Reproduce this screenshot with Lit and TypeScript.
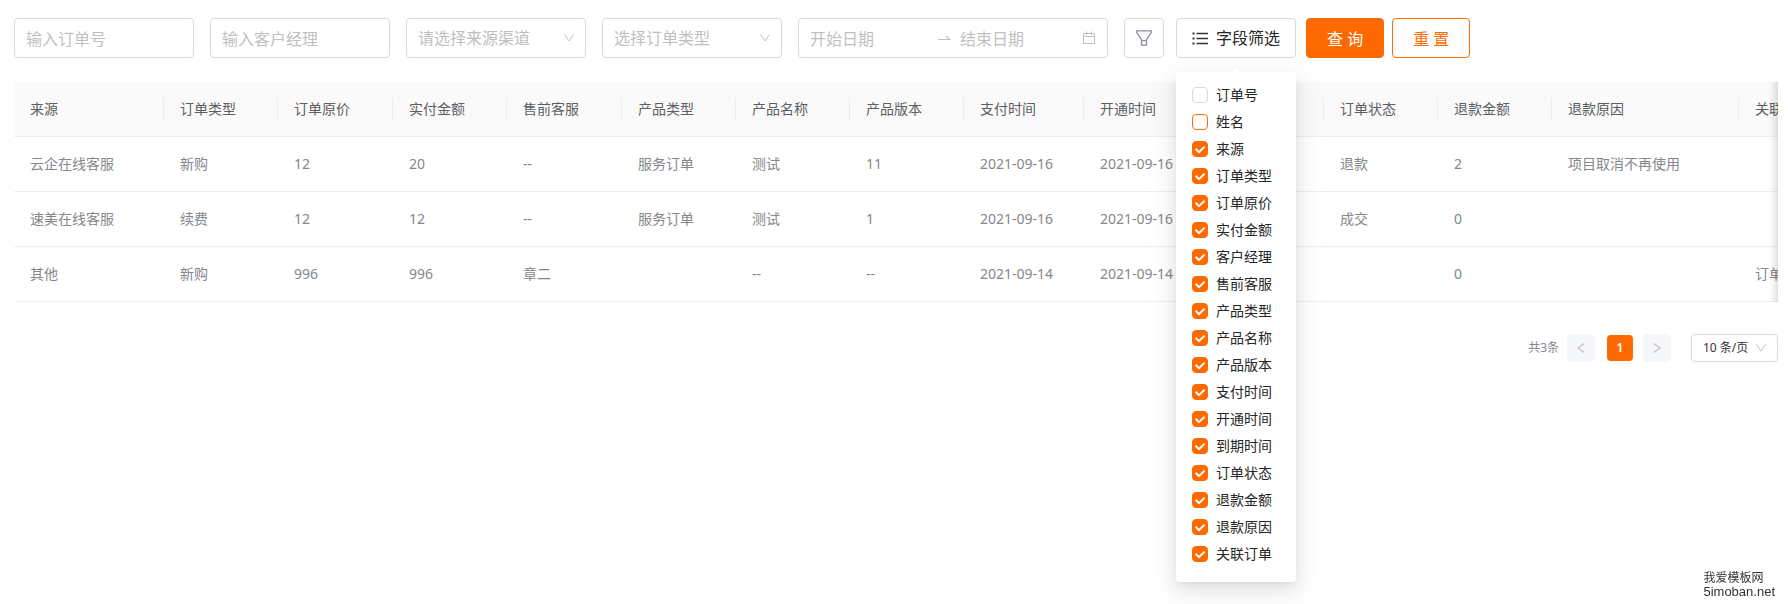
import { LitElement, html, css } from "lit";
import { customElement, state } from "lit/decorators.js";

interface Column {
  key: string;
  title: string;
  width: number;
}

const COLUMNS: Column[] = [
  { key: "source", title: "来源", width: 150 },
  { key: "type", title: "订单类型", width: 114 },
  { key: "price", title: "订单原价", width: 115 },
  { key: "paid", title: "实付金额", width: 114 },
  { key: "presale", title: "售前客服", width: 115 },
  { key: "category", title: "产品类型", width: 114 },
  { key: "product", title: "产品名称", width: 114 },
  { key: "version", title: "产品版本", width: 114 },
  { key: "payDate", title: "支付时间", width: 120 },
  { key: "openDate", title: "开通时间", width: 120 },
  { key: "endDate", title: "到期时间", width: 120 },
  { key: "status", title: "订单状态", width: 114 },
  { key: "refund", title: "退款金额", width: 114 },
  { key: "reason", title: "退款原因", width: 187 },
  { key: "related", title: "关联订单", width: 114 },
];

const TABLE_WIDTH = COLUMNS.reduce((sum, c) => sum + c.width, 0);

const ROWS: Record<string, string>[] = [
  {
    source: "云企在线客服", type: "新购", price: "12", paid: "20", presale: "--",
    category: "服务订单", product: "测试", version: "11",
    payDate: "2021-09-16", openDate: "2021-09-16",
    status: "退款", refund: "2", reason: "项目取消不再使用",
  },
  {
    source: "速美在线客服", type: "续费", price: "12", paid: "12", presale: "--",
    category: "服务订单", product: "测试", version: "1",
    payDate: "2021-09-16", openDate: "2021-09-16",
    status: "成交", refund: "0",
  },
  {
    source: "其他", type: "新购", price: "996", paid: "996", presale: "章二",
    product: "--", version: "--",
    payDate: "2021-09-14", openDate: "2021-09-14",
    refund: "0", related: "订单",
  },
];

const FIELDS = [
  "订单号", "姓名", "来源", "订单类型", "订单原价", "实付金额", "客户经理", "售前客服", "产品类型",
  "产品名称", "产品版本", "支付时间", "开通时间", "到期时间", "订单状态", "退款金额", "退款原因", "关联订单",
];

const chevron = html`<svg class="chevron" viewBox="0 0 10 8" width="10" height="8" aria-hidden="true">
  <path d="M0.5 0.5 5 7 9.5 0.5" fill="none" stroke="currentColor" />
</svg>`;

@customElement("order-table")
export class OrderTable extends LitElement {
  static styles = css`
    :host {
      display: block;
      position: relative;
    }
    .scroller {
      overflow-x: auto;
      scrollbar-width: none;
      border-radius: 4px 0 0 0;
    }
    .shade {
      position: absolute;
      inset: 0 0 0 auto;
      width: 30px;
      box-shadow: inset -10px 0 8px -8px rgba(0, 0, 0, 0.18);
      pointer-events: none;
    }
    .grid {
      table-layout: fixed;
      border-collapse: separate;
      border-spacing: 0;
      font-size: 14px;
      line-height: 22px;
    }
    .head,
    .cell {
      padding: 16px;
      border-bottom: 1px solid #f0f0f0;
      text-align: left;
      font-weight: 400;
      white-space: nowrap;
    }
    .head {
      color: #5c5e61;
      background: #fafafa linear-gradient(#ececec, #ececec) no-repeat right center / 1px 22px;
    }
    .head:last-child {
      background-image: none;
    }
    .cell {
      color: #85878a;
    }
  `;

  render() {
    return html`
      <div class="scroller">
        <table class="grid" style="width:${TABLE_WIDTH}px">
          <colgroup>
            ${COLUMNS.map((c) => html`<col style="width:${c.width}px" />`)}
          </colgroup>
          <thead>
            <tr>
              ${COLUMNS.map((c) => html`<th class="head" scope="col">${c.title}</th>`)}
            </tr>
          </thead>
          <tbody>
            ${ROWS.map(
              (row) => html`<tr>
                ${COLUMNS.map((c) => html`<td class="cell">${row[c.key] ?? ""}</td>`)}
              </tr>`
            )}
          </tbody>
        </table>
      </div>
      <div class="shade"></div>
    `;
  }
}

@customElement("field-filter")
export class FieldFilter extends LitElement {
  @state() private open = true;

  static styles = css`
    :host {
      display: block;
      position: relative;
    }
    .trigger {
      display: flex;
      align-items: center;
      gap: 8px;
      height: 40px;
      padding: 0 15px;
      border: 1px solid #d9d9d9;
      border-radius: 4px;
      background: #fff;
      color: #262626;
      font: inherit;
      font-size: 16px;
      line-height: 24px;
      white-space: nowrap;
      cursor: pointer;
    }
    .menu {
      position: absolute;
      z-index: 2;
      top: 54px;
      left: 0;
      right: 0;
      display: flex;
      flex-direction: column;
      gap: 5px;
      padding: 12px 16px 17px;
      border-radius: 4px;
      background: #fff;
      box-shadow: 0 3px 6px -4px rgba(0, 0, 0, 0.12), 0 6px 16px rgba(0, 0, 0, 0.08),
        0 9px 28px 8px rgba(0, 0, 0, 0.05);
    }
    .menu::before {
      content: "";
      position: absolute;
      top: -3px;
      left: calc(50% - 3px);
      width: 6px;
      height: 6px;
      background: #fff;
      transform: rotate(45deg);
    }
    .option {
      display: flex;
      align-items: center;
      gap: 8px;
      color: #262626;
      font-size: 14px;
      line-height: 22px;
      white-space: nowrap;
      cursor: pointer;
    }
    .box {
      appearance: none;
      flex: none;
      width: 16px;
      height: 16px;
      margin: 0;
      border: 1px solid #d9d9d9;
      border-radius: 4px;
      background: #fff;
      cursor: pointer;
    }
    .box.active {
      border-color: #ff6a00;
    }
    .box:checked {
      border-color: #ff6a00;
      background: #ff6a00
        url("data:image/svg+xml,%3Csvg xmlns='http://www.w3.org/2000/svg' viewBox='0 0 14 14'%3E%3Cpath d='M2.6 6.8 6 10.2 11.6 4.6' fill='none' stroke='white' stroke-width='2'/%3E%3C/svg%3E")
        center / 14px 14px no-repeat;
    }
  `;

  render() {
    return html`
      <button class="trigger" type="button" aria-expanded=${this.open} @click=${() => (this.open = !this.open)}>
        <svg viewBox="0 0 16 16" width="16" height="16" aria-hidden="true">
          <path d="M4.5 3.5H16M4.5 8.5H16M4.5 13.5H16" stroke="#333" stroke-width="1.3" />
          <path d="M0.5 3.5h2M0.5 8.5h2M0.5 13.5h2" stroke="#333" stroke-width="2" />
        </svg>
        字段筛选
      </button>
      ${this.open
        ? html`<div class="menu">
            ${FIELDS.map(
              (name, i) => html`<label class="option">
                <input class="box ${i === 1 ? "active" : ""}" type="checkbox" ?checked=${i > 1} />${name}
              </label>`
            )}
          </div>`
        : null}
    `;
  }
}

@customElement("app-root")
export class AppRoot extends LitElement {
  static styles = css`
    :host {
      display: block;
      box-sizing: border-box;
      min-height: 100vh;
      padding: 18px 10px 0 14px;
      background: #fff;
      font-family: "Noto Sans", "Noto Sans CJK SC", sans-serif;
    }
    * {
      box-sizing: border-box;
    }
    .toolbar {
      display: flex;
      flex-wrap: wrap;
      gap: 16px;
    }
    .actions {
      display: flex;
      gap: 12px;
    }
    .commands {
      display: flex;
      gap: 10px;
    }
    .submit {
      display: flex;
      gap: 8px;
    }
    .field {
      width: 180px;
      height: 40px;
      padding: 0 11px;
      border: 1px solid #d9d9d9;
      border-radius: 4px;
      background: #fff;
      color: #262626;
      font: inherit;
      font-size: 16px;
    }
    input.field,
    .date {
      padding-top: 2px;
    }
    .field::placeholder,
    .date::placeholder {
      color: #bfbfbf;
      opacity: 1;
    }
    .picker {
      display: grid;
      align-items: center;
      color: #bfbfbf;
    }
    .picker > * {
      grid-area: 1 / 1;
    }
    .picker .field {
      appearance: none;
      color: #bfbfbf;
    }
    .chevron {
      justify-self: end;
      margin-right: 12px;
      pointer-events: none;
    }
    .range {
      display: flex;
      align-items: center;
      width: 310px;
      height: 40px;
      padding: 0 11px;
      border: 1px solid #d9d9d9;
      border-radius: 4px;
      color: #bfbfbf;
    }
    .date {
      flex: 1;
      min-width: 0;
      padding-inline: 0;
      padding-bottom: 0;
      border: 0;
      outline: 0;
      background: none;
      font: inherit;
      font-size: 16px;
    }
    .arrow {
      flex: none;
      margin: 0 8px;
    }
    .calendar {
      flex: none;
      margin-left: 4px;
    }
    .square {
      display: grid;
      place-items: center;
      width: 40px;
      height: 40px;
      padding: 0;
      border: 1px solid #d9d9d9;
      border-radius: 4px;
      background: #fff;
      cursor: pointer;
    }
    .btn {
      height: 40px;
      padding: 0 20px;
      border: 1px solid #ff6a00;
      border-radius: 4px;
      background: #fff;
      color: #ff6a00;
      font: inherit;
      font-size: 16px;
      white-space: nowrap;
      cursor: pointer;
    }
    .btn.primary {
      background: #ff6a00;
      color: #fff;
    }
    .list {
      margin-top: 24px;
    }
    .pager {
      display: flex;
      justify-content: flex-end;
      align-items: center;
      margin-top: 32px;
      font-size: 12px;
      line-height: 20px;
      color: #85878a;
    }
    .step {
      display: grid;
      place-items: center;
      width: 28px;
      height: 28px;
      padding: 0;
      border: 0;
      border-radius: 4px;
      background: #f5f7fa;
      color: #bfbfbf;
    }
    .prev {
      margin-left: 8px;
    }
    .page {
      width: 26px;
      height: 26px;
      margin: 0 10px 0 12px;
      padding: 0;
      border: 0;
      border-radius: 4px;
      background: #ff6a00;
      color: #fff;
      font: inherit;
      font-weight: 600;
    }
    .picker.small {
      margin-left: 20px;
    }
    .picker.small .field {
      width: 87px;
      height: 28px;
      color: #333;
      font-size: 12px;
    }
    .watermark {
      position: fixed;
      right: 13px;
      bottom: 5px;
      color: #333;
      font-family: "Liberation Sans", "Noto Sans CJK SC", sans-serif;
      font-size: 12px;
      line-height: 14px;
    }
    .site {
      display: block;
      font-size: 13px;
    }
  `;

  render() {
    return html`
      <form class="toolbar" @submit=${(e: Event) => e.preventDefault()}>
        <input class="field" type="text" placeholder="输入订单号" aria-label="订单号" />
        <input class="field" type="text" placeholder="输入客户经理" aria-label="客户经理" />
        <div class="picker">
          <select class="field" aria-label="来源渠道">
            <option>请选择来源渠道</option>
          </select>
          ${chevron}
        </div>
        <div class="picker">
          <select class="field" aria-label="订单类型">
            <option>选择订单类型</option>
          </select>
          ${chevron}
        </div>
        <div class="range">
          <input class="date" type="text" placeholder="开始日期" aria-label="开始日期" />
          <svg class="arrow" viewBox="0 0 16 16" width="16" height="16" aria-hidden="true">
            <path d="M2 9.5H13.5L10 5.8" fill="none" stroke="currentColor" stroke-width="1.2" />
          </svg>
          <input class="date" type="text" placeholder="结束日期" aria-label="结束日期" />
          <svg class="calendar" viewBox="0 0 14 14" width="14" height="14" aria-hidden="true">
            <path d="M1.5 2.5H12.5V12.5H1.5ZM1.5 5.5H12.5M4.5 0.5V4M9.5 0.5V4" fill="none" stroke="currentColor" />
          </svg>
        </div>
        <div class="actions">
          <button class="square" type="button" aria-label="筛选">
            <svg viewBox="0 0 16 16" width="16" height="16" aria-hidden="true">
              <path
                d="M0.7 0.9H15.3V2.4L10.5 9.6V15.2H5.5V9.6L0.7 2.4ZM5.5 10.6H10.5"
                fill="none"
                stroke="#8c939d"
                stroke-width="1.3"
                stroke-linejoin="round"
              />
            </svg>
          </button>
          <div class="commands">
            <field-filter></field-filter>
            <div class="submit">
              <button class="btn primary" type="submit">查 询</button>
              <button class="btn" type="reset">重 置</button>
            </div>
          </div>
        </div>
      </form>

      <order-table class="list"></order-table>

      <nav class="pager" aria-label="分页">
        <span>共3条</span>
        <button class="step prev" type="button" aria-label="上一页" disabled>
          <svg viewBox="0 0 8 10" width="8" height="10" aria-hidden="true">
            <path d="M7.2 0.5 1 5 7.2 9.5" fill="none" stroke="currentColor" stroke-width="1.2" />
          </svg>
        </button>
        <button class="page" type="button" aria-current="page">1</button>
        <button class="step" type="button" aria-label="下一页" disabled>
          <svg viewBox="0 0 8 10" width="8" height="10" aria-hidden="true">
            <path d="M0.8 0.5 7 5 0.8 9.5" fill="none" stroke="currentColor" stroke-width="1.2" />
          </svg>
        </button>
        <div class="picker small">
          <select class="field" aria-label="每页条数">
            <option>10 条/页</option>
          </select>
          ${chevron}
        </div>
      </nav>

      <footer class="watermark">我爱模板网<span class="site">5imoban.net</span></footer>
    `;
  }
}
